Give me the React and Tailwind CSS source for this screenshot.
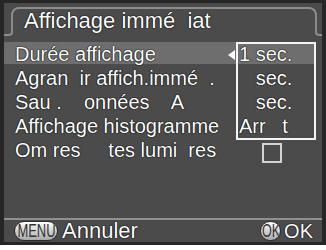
import React from 'react';

const rows = [
  { label: 'Durée affichage', value: '1 sec.', active: true },
  { label: 'Agran  ir affich.immé  .', value: '   sec.' },
  { label: 'Sau .    onnées    A', value: '   sec.' },
  { label: 'Affichage histogramme', value: 'Arr   t' },
  { label: 'Om res     tes lumi  res', check: true },
];

const shadow = '[text-shadow:0_0_1px_#000,0_0_1px_#000,0_0_1px_#000]';

export default function App() {
  return (
    <div className="w-[326px] h-[250px] bg-white font-['Liberation_Sans',Arial,sans-serif]">
      <div className="w-[326px] h-[245px] bg-[#262626] pt-[3px] pl-[4px] pr-[4px] pb-[3px]">
        <div className="h-full bg-[#4b4b4b] flex flex-col text-white">
          {/* Title tab */}
          <div className="pt-[4px] pb-[6px]">
            <div className={`ml-[7px] mr-[5px] h-[25px] border-2 border-b-0 border-[#8c8c8c] rounded-t-[8px] pl-[11px] text-[22px] leading-[24px] whitespace-pre ${shadow}`}>
              Affichage immé  iat
            </div>
            <div className="flex h-[4px]">
              <div className="w-[9px] border-r-2 border-b-2 border-[#8c8c8c] rounded-br-[5px]" />
              <div className="flex-1" />
              <div className="w-[7px] border-l-2 border-b-2 border-[#8c8c8c] rounded-bl-[5px]" />
            </div>
          </div>

          {/* Menu rows */}
          <div className="relative mr-[6px]">
            {rows.map((r, i) => (
              <div
                key={i}
                className={`flex h-[22px] mb-[2px] pt-[3px] leading-[19px] text-[20px] whitespace-pre ${r.active ? 'bg-[#6e6e6e]' : ''}`}
              >
                <div className={`flex-1 min-w-0 pl-[11px] ${shadow}`}>{r.label}</div>
                <div className="w-[88px] shrink-0 flex">
                  <div className="w-[11px] shrink-0 flex items-center">
                    {r.active && (
                      <div className="mt-[1px] w-0 h-0 border-t-[5px] border-b-[5px] border-r-[7px] border-t-transparent border-b-transparent border-r-white" />
                    )}
                  </div>
                  {r.check ? (
                    <div className="ml-[23px] mt-[2px] w-[20px] h-[20px] border-2 border-[#d4d4d4]" />
                  ) : (
                    <div className={shadow}>{r.value}</div>
                  )}
                </div>
              </div>
            ))}
            <div className="absolute left-[232px] top-0 w-[80px] h-[98px] border-2 border-[#f4f4f4]" />
          </div>

          <div className="flex-1" />

          {/* Footer */}
          <div className="h-[2px] bg-[#8f8f8f]" />
          <div className="h-[22px] flex items-center pl-[10px] pr-[9px]">
            <div className="w-[44px] h-[20px] rounded-full border border-[#2a2a2a] bg-gradient-to-b from-white to-[#a9a9a9] flex items-center justify-center overflow-hidden">
              <span className="inline-block text-[18px] leading-[18px] text-[#333] scale-x-[0.72]">MENU</span>
            </div>
            <span className={`ml-[4px] text-[22px] leading-[22px] ${shadow}`}>Annuler</span>
            <div className="flex-1" />
            <div className="w-[21px] h-[20px] rounded-full border border-[#2a2a2a] bg-gradient-to-b from-white to-[#a9a9a9] flex items-center justify-center overflow-hidden">
              <span className="inline-block text-[18px] leading-[18px] text-[#333] scale-x-[0.7]">OK</span>
            </div>
            <span className={`ml-[3px] text-[20px] leading-[22px] ${shadow}`}>OK</span>
          </div>
        </div>
      </div>
    </div>
  );
}
